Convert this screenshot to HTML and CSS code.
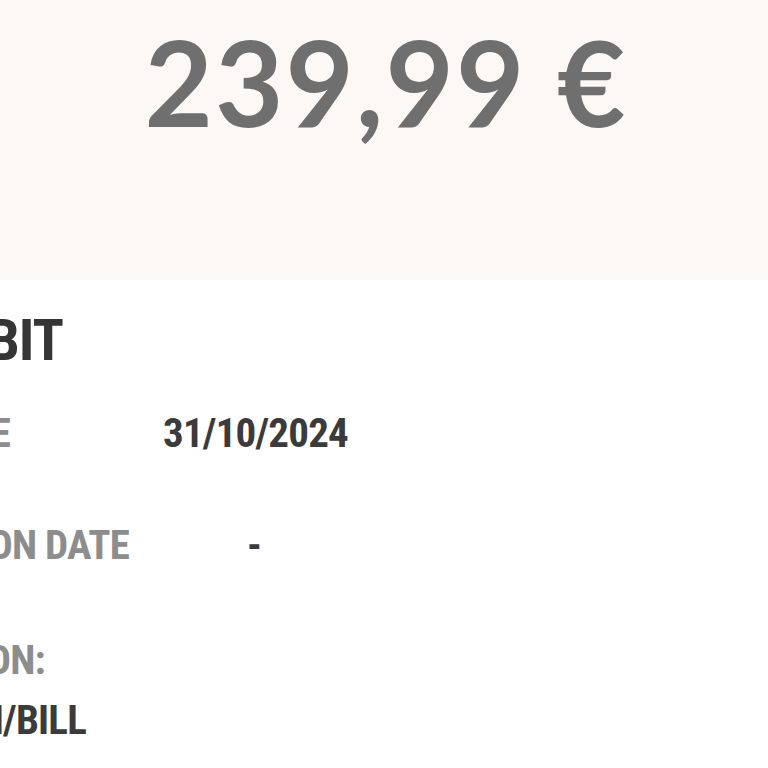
FILE: index.html
```html
<!DOCTYPE html>
<html lang="en">
<head>
<meta charset="utf-8">
<title>Direct debit</title>
<link rel="stylesheet" href="styles.css">
</head>
<body>
<div class="page">
  <header class="hero">
    <div class="amount">239,99 €</div>
  </header>
  <section class="details">
    <div class="title-row"><h1 class="title">DIRECT DEBIT</h1></div>
    <div class="row row-due">
      <div class="label-box w-due"><span class="label">DUE DATE</span></div>
      <span class="value v-due">31/10/2024</span>
    </div>
    <div class="row row-exec">
      <div class="label-box w-exec"><span class="label">EXECUTION DATE</span></div>
      <span class="value v-exec">-</span>
    </div>
    <div class="row row-desc">
      <div class="label-box w-desc"><span class="label">DESCRIPTION:</span></div>
    </div>
    <div class="row row-bill">
      <div class="label-box w-bill"><span class="value">PREMIUM/BILL</span></div>
    </div>
  </section>
</div>
</body>
</html>
```

FILE: styles.css
```css
html, body {
  margin: 0;
  padding: 0;
  background: #ffffff;
}
.page {
  width: 768px;
  height: 768px;
  overflow: hidden;
}
.hero {
  height: 280px;
  box-sizing: border-box;
  background: #fcf8f6;
  padding-top: 23px;
  display: flex;
  justify-content: center;
}
.amount {
  font-family: Lato, "Open Sans", sans-serif;
  font-weight: 700;
  font-size: 118px;
  line-height: 1;
  color: #6f6f6f;
  letter-spacing: 2px;
  margin-left: 4px;
  white-space: nowrap;
}
.details {
  padding-top: 31px;
  font-family: "Roboto Condensed", "Liberation Sans Narrow", "DejaVu Sans Condensed", sans-serif;
  font-stretch: condensed;
  font-weight: 700;
}
.title-row {
  width: 63px;
  display: flex;
  justify-content: flex-end;
}
.title {
  margin: 0;
  font-size: 58px;
  line-height: 58px;
  font-weight: 700;
  color: #353535;
  letter-spacing: -1px;
  white-space: nowrap;
}
.row {
  display: flex;
  align-items: flex-start;
  font-size: 41px;
  line-height: 42px;
  letter-spacing: -0.8px;
}
.label-box {
  display: flex;
  justify-content: flex-end;
  flex: none;
}
.label {
  color: #8d8d8d;
  white-space: nowrap;
}
.value {
  color: #3b3b3b;
  white-space: nowrap;
}
.row-due { margin-top: 43px; }
.row-exec { margin-top: 70px; }
.row-desc { margin-top: 73px; }
.row-bill { margin-top: 18px; }
.w-due { width: 10px; }
.w-exec { width: 129px; }
.w-desc { width: 45px; }
.w-bill { width: 86px; }
.v-due { margin-left: 153px; }
.v-exec { margin-left: 118px; }
```
